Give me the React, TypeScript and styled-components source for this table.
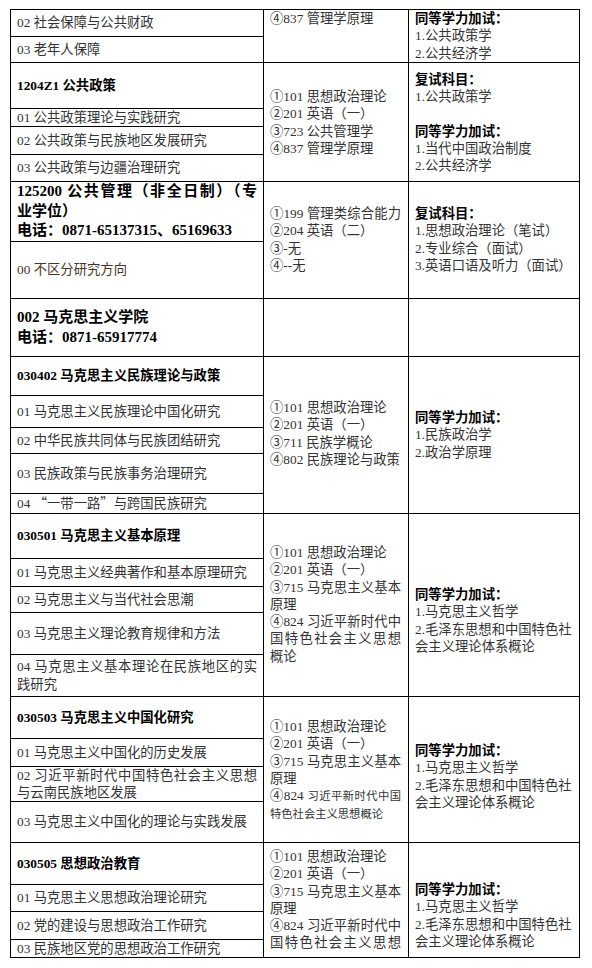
import React from 'react';
import styled, { createGlobalStyle } from 'styled-components';

const GlobalStyle = createGlobalStyle`
  html, body {
    margin: 0;
    padding: 0;
    background: #ffffff;
  }
  body {
    font-family: "Liberation Serif", "Noto Sans CJK SC", serif;
    color: #333333;
  }
`;

const Page = styled.div`
  width: 592px;
  height: 968px;
  overflow: hidden;
  box-sizing: border-box;
  padding: 9px 0 0 10px;
`;

const Table = styled.div`
  width: 570px;
  box-sizing: border-box;
  border-left: 1px solid #000;
  border-right: 1px solid #000;
  border-bottom: 1px solid #000;
`;

const Group = styled.div<{ $h: number }>`
  display: grid;
  grid-template-columns: 252px 145px 171px;
  grid-template-rows: ${({ $h }) => $h}px;
`;

const Stack = styled.div`
  display: flex;
  flex-direction: column;
`;

const Row = styled.div<{ $h: number }>`
  height: ${({ $h }) => $h}px;
  box-sizing: border-box;
  border-top: 1px solid #000;
  padding: 0 6px;
  display: flex;
  flex-direction: column;
  justify-content: center;
  overflow: hidden;
`;

const Cell = styled.div<{ $pt: number }>`
  box-sizing: border-box;
  border-top: 1px solid #000;
  border-left: 1px solid #000;
  padding: ${({ $pt }) => $pt}px 7px 0 6px;
  overflow: hidden;
`;

type Kind = 'text' | 'head' | 'big' | 'brown' | 'label';

const Ln = styled.div<{ $kind?: Kind; $spread?: boolean }>`
  font-size: ${({ $kind }) => ($kind === 'big' ? '15px' : '13.33px')};
  line-height: ${({ $kind }) => ($kind === 'big' ? '19.5px' : '17.3px')};
  font-weight: ${({ $kind }) => ($kind === 'head' || $kind === 'big' || $kind === 'label' ? 700 : 400)};
  color: ${({ $kind }) =>
    $kind === 'brown' ? '#4a3424' : $kind === 'text' || !$kind ? '#333333' : '#000'};
  white-space: nowrap;
  text-align: justify;
  text-align-last: ${({ $spread }) => ($spread ? 'justify' : 'left')};
  min-height: ${({ $kind }) => ($kind === 'big' ? '19.5px' : '17.3px')};
`;

const Small = styled.span`
  font-size: 11.3px;
`;

const Cjk = styled.span`
  font-family: "Noto Sans CJK SC", sans-serif;
`;

type LineData = { t: React.ReactNode; spread?: boolean; kind?: Kind };
type RowData = { h: number; lines: LineData[] };
type GroupData = {
  rows: RowData[];
  exam: { pt: number; lines: LineData[] };
  extra: { pt: number; lines: LineData[] };
};

const t = (x: React.ReactNode, spread = false): LineData => ({ t: x, spread });
const b = (x: React.ReactNode): LineData => ({ t: x, kind: 'label' });
const one = (h: number, x: React.ReactNode, kind: Kind = 'text'): RowData => ({
  h,
  lines: [{ t: x, kind }],
});

const marxExam: LineData[] = [
  t('①101 思想政治理论'),
  t('②201 英语（一）'),
  t('③715 马克思主义基本', true),
  t('原理'),
  t('④824 习近平新时代中', true),
  t('国特色社会主义思想', true),
  t('概论'),
];

const marxExtra: LineData[] = [
  b('同等学力加试：'),
  t('1.马克思主义哲学'),
  t('2.毛泽东思想和中国特色社'),
  t('会主义理论体系概论'),
];

const groups: GroupData[] = [
  {
    rows: [one(27, '02 社会保障与公共财政'), one(26, '03 老年人保障')],
    exam: { pt: 0, lines: [t('④837 管理学原理')] },
    extra: { pt: 0, lines: [b('同等学力加试：'), t('1.公共政策学'), t('2.公共经济学')] },
  },
  {
    rows: [
      one(46, '1204Z1 公共政策', 'head'),
      one(18, '01 公共政策理论与实践研究'),
      one(28, '02 公共政策与民族地区发展研究'),
      one(27, '03 公共政策与边疆治理研究'),
    ],
    exam: {
      pt: 25,
      lines: [t('①101 思想政治理论'), t('②201 英语（一）'), t('③723 公共管理学'), t('④837 管理学原理')],
    },
    extra: {
      pt: 8,
      lines: [
        b('复试科目：'),
        t('1.公共政策学'),
        t(''),
        b('同等学力加试：'),
        t('1.当代中国政治制度'),
        t('2.公共经济学'),
      ],
    },
  },
  {
    rows: [
      {
        h: 60,
        lines: [
          { t: '125200  公共管理（非全日制）（专', kind: 'big', spread: true },
          { t: '业学位）', kind: 'big' },
          { t: '电话：0871-65137315、65169633', kind: 'big' },
        ],
      },
      one(57, '00 不区分研究方向', 'brown'),
    ],
    exam: {
      pt: 23,
      lines: [t('①199 管理类综合能力', true), t('②204 英语（二）'), t('③-无'), t('④--无')],
    },
    extra: {
      pt: 23,
      lines: [
        b('复试科目：'),
        t('1.思想政治理论（笔试）'),
        t('2.专业综合（面试）'),
        t('3.英语口语及听力（面试）'),
      ],
    },
  },
  {
    rows: [
      {
        h: 58,
        lines: [
          { t: '002 马克思主义学院', kind: 'big' },
          { t: '电话：0871-65917774', kind: 'big' },
        ],
      },
    ],
    exam: { pt: 0, lines: [] },
    extra: { pt: 0, lines: [] },
  },
  {
    rows: [
      one(39, '030402 马克思主义民族理论与政策', 'head'),
      one(32, '01 马克思主义民族理论中国化研究'),
      one(26, '02 中华民族共同体与民族团结研究'),
      one(40, '03 民族政策与民族事务治理研究'),
      one(
        20,
        <>
          04 <Cjk>“一带一路”</Cjk>与跨国民族研究
        </>,
      ),
    ],
    exam: {
      pt: 42,
      lines: [t('①101 思想政治理论'), t('②201 英语（一）'), t('③711 民族学概论'), t('④802 民族理论与政策')],
    },
    extra: { pt: 52, lines: [b('同等学力加试：'), t('1.民族政治学'), t('2.政治学原理')] },
  },
  {
    rows: [
      one(45, '030501 马克思主义基本原理', 'head'),
      one(28, '01 马克思主义经典著作和基本原理研究'),
      one(26, '02 马克思主义与当代社会思潮'),
      one(42, '03 马克思主义理论教育规律和方法'),
      { h: 42, lines: [t('04  马克思主义基本理论在民族地区的实', true), t('践研究')] },
    ],
    exam: { pt: 30, lines: marxExam },
    extra: { pt: 72, lines: marxExtra },
  },
  {
    rows: [
      one(42, '030503 马克思主义中国化研究', 'head'),
      one(28, '01 马克思主义中国化的历史发展'),
      { h: 35, lines: [t('02  习近平新时代中国特色社会主义思想', true), t('与云南民族地区发展')] },
      one(41, '03 马克思主义中国化的理论与实践发展'),
    ],
    exam: {
      pt: 21,
      lines: [
        t('①101 思想政治理论'),
        t('②201 英语（一）'),
        t('③715 马克思主义基本', true),
        t('原理'),
        t(
          <>
            ④824 <Small>习近平新时代中国</Small>
          </>,
          true,
        ),
        t(<Small>特色社会主义思想概论</Small>),
      ],
    },
    extra: { pt: 45, lines: marxExtra },
  },
  {
    rows: [
      one(42, '030505 思想政治教育', 'head'),
      one(27, '01 马克思主义思想政治理论研究'),
      one(28, '02 党的建设与思想政治工作研究'),
      one(18, '03 民族地区党的思想政治工作研究'),
    ],
    // the page ends here, so the last line of this cell is not shown
    exam: { pt: 5, lines: marxExam.slice(0, 6) },
    extra: { pt: 38, lines: marxExtra },
  },
];

function Lines({ lines }: { lines: LineData[] }) {
  return (
    <>
      {lines.map((l, i) => (
        <Ln key={i} $kind={l.kind} $spread={l.spread}>
          {l.t}
        </Ln>
      ))}
    </>
  );
}

export default function App() {
  return (
    <Page>
      <GlobalStyle />
      <Table>
        {groups.map((g, gi) => {
          const total = g.rows.reduce((s, r) => s + r.h, 0);
          return (
            <Group key={gi} $h={total}>
              <Stack>
                {g.rows.map((r, ri) => (
                  <Row key={ri} $h={r.h}>
                    <Lines lines={r.lines} />
                  </Row>
                ))}
              </Stack>
              <Cell $pt={g.exam.pt}>
                <Lines lines={g.exam.lines} />
              </Cell>
              <Cell $pt={g.extra.pt}>
                <Lines lines={g.extra.lines} />
              </Cell>
            </Group>
          );
        })}
      </Table>
    </Page>
  );
}
